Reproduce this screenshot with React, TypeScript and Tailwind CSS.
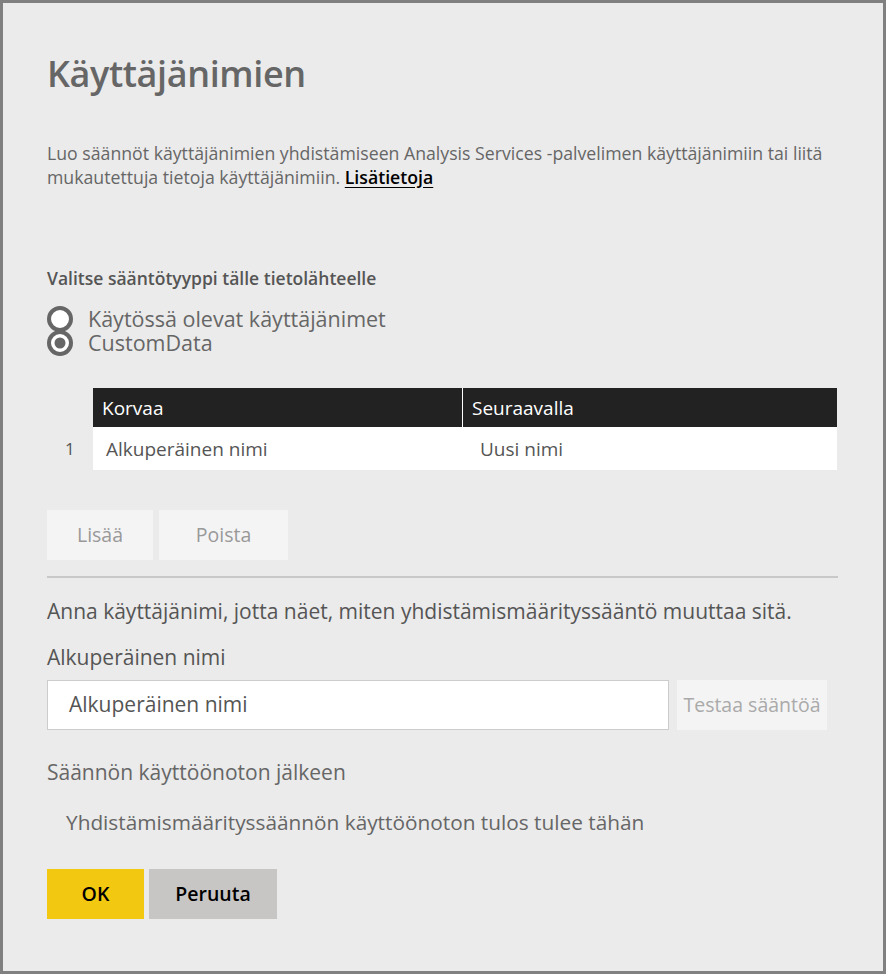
import React from "react";

const font = { fontFamily: '"Segoe UI", "Open Sans", "Noto Sans", sans-serif' } as React.CSSProperties;

function Radio({ checked }: { checked?: boolean }) {
  return (
    <svg width="26" height="26" viewBox="0 0 26 26" className="shrink-0">
      <circle cx="13" cy="13" r="11" fill="#ffffff" stroke="#666666" strokeWidth="4" />
      {checked && <circle cx="13" cy="13" r="5.5" fill="#666666" />}
    </svg>
  );
}

export default function App() {
  return (
    <div className="w-[886px] h-[974px] bg-[#ebebeb] border-[3px] border-[#808080] overflow-hidden" style={font}>
      <div className="pl-[44px] pr-[45px]">
        {/* Title */}
        <div className="h-[50px] mt-[46px] flex items-center text-[36px] leading-[50px] font-semibold text-[#666666] tracking-[-0.4px]">
          Käyttäjänimien
        </div>
        {/* Description */}
        <div className="mt-[42px] text-[17.7px] leading-[24px] text-[#666666]">
          Luo säännöt käyttäjänimien yhdistämiseen Analysis Services -palvelimen käyttäjänimiin tai liitä mukautettuja tietoja käyttäjänimiin.{" "}
          <a className="font-semibold text-black underline underline-offset-[3px]">Lisätietoja</a>
        </div>
        {/* Rule type */}
        <div className="mt-[77px] h-[24px] flex items-center text-[17.5px] leading-[24px] font-semibold text-[#555555]">
          Valitse sääntötyyppi tälle tietolähteelle
        </div>
        <div className="mt-[17px] flex flex-col">
          <div className="h-[24px] flex items-center gap-[15px] text-[21.5px] leading-[24px] text-[#666666]">
            <Radio />
            <span>Käytössä olevat käyttäjänimet</span>
          </div>
          <div className="h-[24px] flex items-center gap-[15px] text-[21.5px] leading-[24px] text-[#666666]">
            <Radio checked />
            <span>CustomData</span>
          </div>
        </div>
        {/* Table */}
        <div className="mt-[33px] grid grid-cols-[46px_370px_374px] w-[790px]">
          <div></div>
          <div className="h-[39px] bg-[#222222] text-white text-[19px] leading-[24px] flex items-center pl-[9px] border-r border-white">
            Korvaa
          </div>
          <div className="h-[39px] bg-[#222222] text-white text-[19px] leading-[24px] flex items-center pl-[9px]">
            Seuraavalla
          </div>
          <div className="h-[43px] flex items-center pl-[18px] text-[17px] text-[#555555]">1</div>
          <div className="h-[43px] bg-white flex items-center pl-[13px] text-[19px] leading-[24px] text-[#555555]">
            Alkuperäinen nimi
          </div>
          <div className="h-[43px] bg-white flex items-center pl-[17px] text-[19px] leading-[24px] text-[#555555]">
            Uusi nimi
          </div>
        </div>
        {/* Add / Remove */}
        <div className="mt-[40px] flex gap-[6px]">
          <button className="w-[106px] h-[50px] bg-[#f4f4f4] text-[19.5px] text-[#999999]">Lisää</button>
          <button className="w-[129px] h-[50px] bg-[#f4f4f4] text-[19.5px] text-[#999999]">Poista</button>
        </div>
        <div className="mt-[16px] h-[2px] bg-[#c8c8c8] w-[791px]"></div>
        {/* Test */}
        <div className="mt-[21px] h-[24px] flex items-center text-[21px] leading-[24px] text-[#555555] whitespace-nowrap">
          Anna käyttäjänimi, jotta näet, miten yhdistämismäärityssääntö muuttaa sitä.
        </div>
        <div className="mt-[22px] h-[24px] flex items-center text-[21px] leading-[24px] text-[#555555]">
          Alkuperäinen nimi
        </div>
        <div className="mt-[11px] flex gap-[8px]">
          <div className="w-[622px] h-[50px] bg-white border border-[#cccccc] flex items-center pl-[21px] text-[21px] text-[#555555]">
            Alkuperäinen nimi
          </div>
          <button className="w-[150px] h-[50px] bg-[#f4f4f4] text-[19.5px] text-[#aaaaaa] whitespace-nowrap">
            Testaa sääntöä
          </button>
        </div>
        <div className="mt-[30px] h-[24px] flex items-center text-[21px] leading-[24px] text-[#666666]">
          Säännön käyttöönoton jälkeen
        </div>
        <div className="mt-[26px] h-[24px] flex items-center pl-[19px] text-[20.8px] leading-[24px] text-[#666666] whitespace-nowrap">
          Yhdistämismäärityssäännön käyttöönoton tulos tulee tähän
        </div>
        <div className="mt-[35px] flex gap-[5px]">
          <button className="w-[97px] h-[50px] bg-[#f2c811] text-[19.5px] font-semibold text-black">OK</button>
          <button className="w-[128px] h-[50px] bg-[#c8c6c4] text-[19.5px] font-semibold text-black">Peruuta</button>
        </div>
      </div>
    </div>
  );
}
